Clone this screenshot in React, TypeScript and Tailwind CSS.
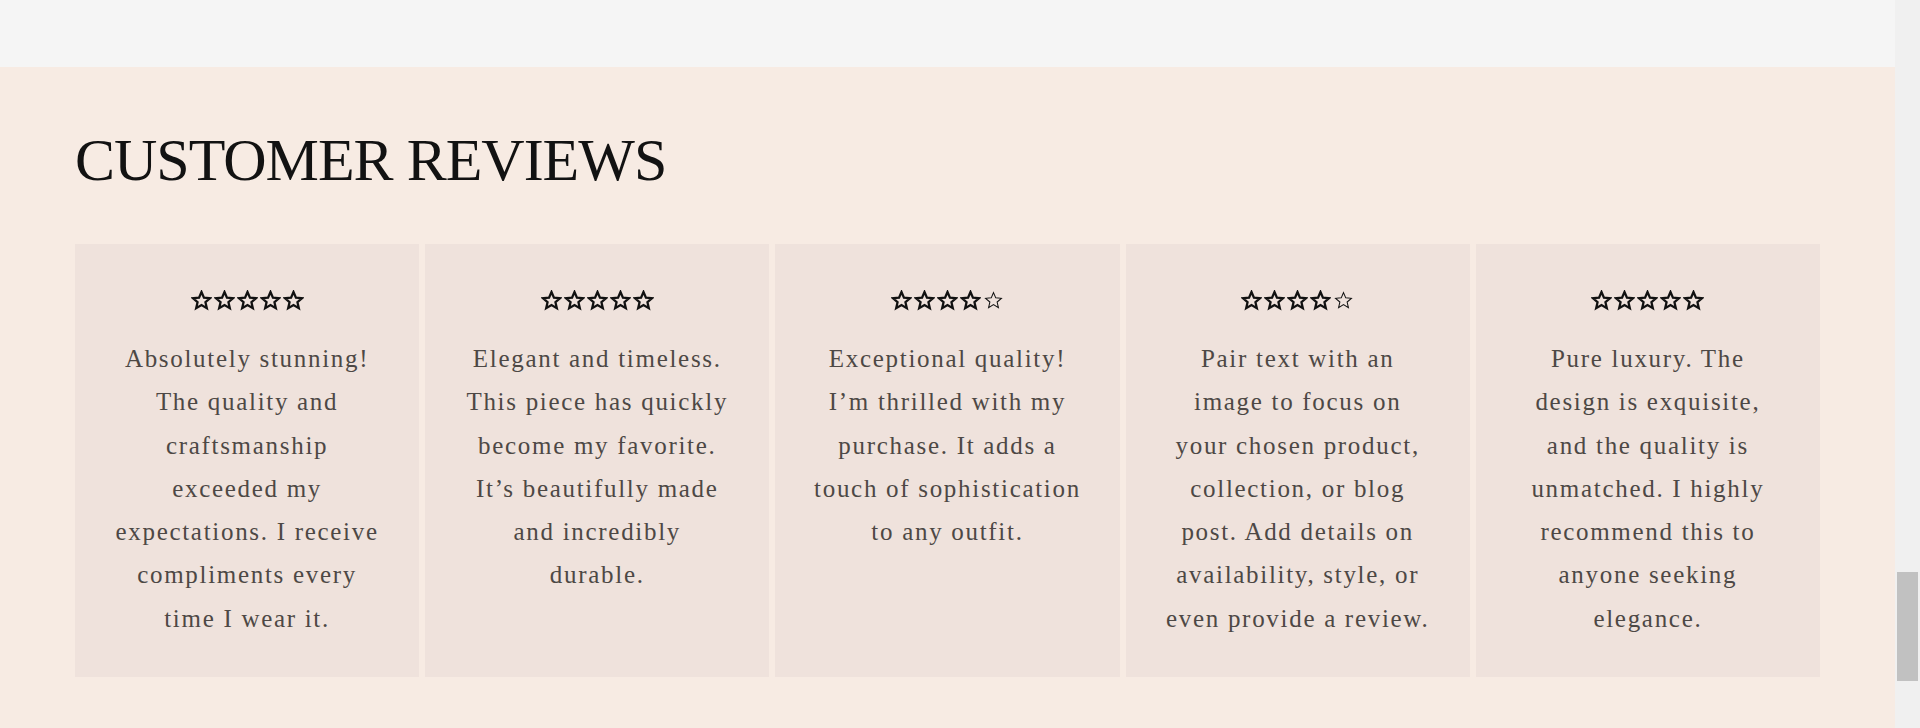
const reviews = [
  {
    id: 1,
    rating: 5,
    lines: [
      "Absolutely stunning!",
      "The quality and",
      "craftsmanship",
      "exceeded my",
      "expectations. I receive",
      "compliments every",
      "time I wear it.",
    ],
  },
  {
    id: 2,
    rating: 5,
    lines: [
      "Elegant and timeless.",
      "This piece has quickly",
      "become my favorite.",
      "It\u2019s beautifully made",
      "and incredibly",
      "durable.",
    ],
  },
  {
    id: 3,
    rating: 4,
    lines: [
      "Exceptional quality!",
      "I\u2019m thrilled with my",
      "purchase. It adds a",
      "touch of sophistication",
      "to any outfit.",
    ],
  },
  {
    id: 4,
    rating: 4,
    lines: [
      "Pair text with an",
      "image to focus on",
      "your chosen product,",
      "collection, or blog",
      "post. Add details on",
      "availability, style, or",
      "even provide a review.",
    ],
  },
  {
    id: 5,
    rating: 5,
    lines: [
      "Pure luxury. The",
      "design is exquisite,",
      "and the quality is",
      "unmatched. I highly",
      "recommend this to",
      "anyone seeking",
      "elegance.",
    ],
  },
];

const STAR = "12,2.2 14.8,8.7 21.8,9.3 16.5,13.9 18.1,20.8 12,17.1 5.9,20.8 7.5,13.9 2.2,9.3 9.2,8.7";

function Star({ full }: { full: boolean }) {
  return full ? (
    <svg viewBox="0 0 24 24" className="w-[21px] h-[21px]">
      <polygon points={STAR} fill="none" stroke="#111" strokeWidth="2.6" strokeLinejoin="miter" />
    </svg>
  ) : (
    <svg viewBox="0 0 24 24" className="w-[21px] h-[21px]">
      <polygon points={STAR} fill="none" stroke="#111" strokeWidth="1.3" transform="translate(12 12) scale(0.92) translate(-12 -12)" />
    </svg>
  );
}

function ReviewCard({ rating, lines }: { rating: number; lines: string[] }) {
  return (
    <div className="bg-[#efe2dc] pt-[46px] pb-[37px] flex flex-col items-center">
      <div className="flex gap-[2px]">
        {[0, 1, 2, 3, 4].map((i) => (
          <Star key={i} full={i < rating} />
        ))}
      </div>
      <p className="mt-[26px] text-center text-[25px] leading-[43.3px] tracking-[1.7px] text-[#4d4845] font-['Liberation_Serif',serif]">
        {lines.map((line, i) => (
          <span key={i} className="block whitespace-nowrap">
            {line}
          </span>
        ))}
      </p>
    </div>
  );
}

export default function App() {
  return (
    <div className="flex min-h-screen bg-[#f7ebe3]">
      <main className="flex-1 flex flex-col">
        {/* top band */}
        <div className="h-[67px] bg-[#f5f5f5]" />

        {/* Reviews */}
        <section className="flex-1 bg-[#f7ebe3] px-[75px] pt-[63px] pb-[51px]">
          <h2 className="text-[60px] leading-none tracking-[-1px] text-[#121212] font-['Liberation_Serif',serif] font-normal">
            CUSTOMER REVIEWS
          </h2>
          <div className="mt-[54px] grid grid-cols-5 gap-[6px]">
            {reviews.map((r) => (
              <ReviewCard key={r.id} rating={r.rating} lines={r.lines} />
            ))}
          </div>
        </section>
      </main>

      {/* scrollbar */}
      <aside className="w-[25px] bg-[#f0f0f0] pt-[572px] px-[2px]">
        <div className="h-[109px] bg-[#c1c1c1]" />
      </aside>
    </div>
  );
}
